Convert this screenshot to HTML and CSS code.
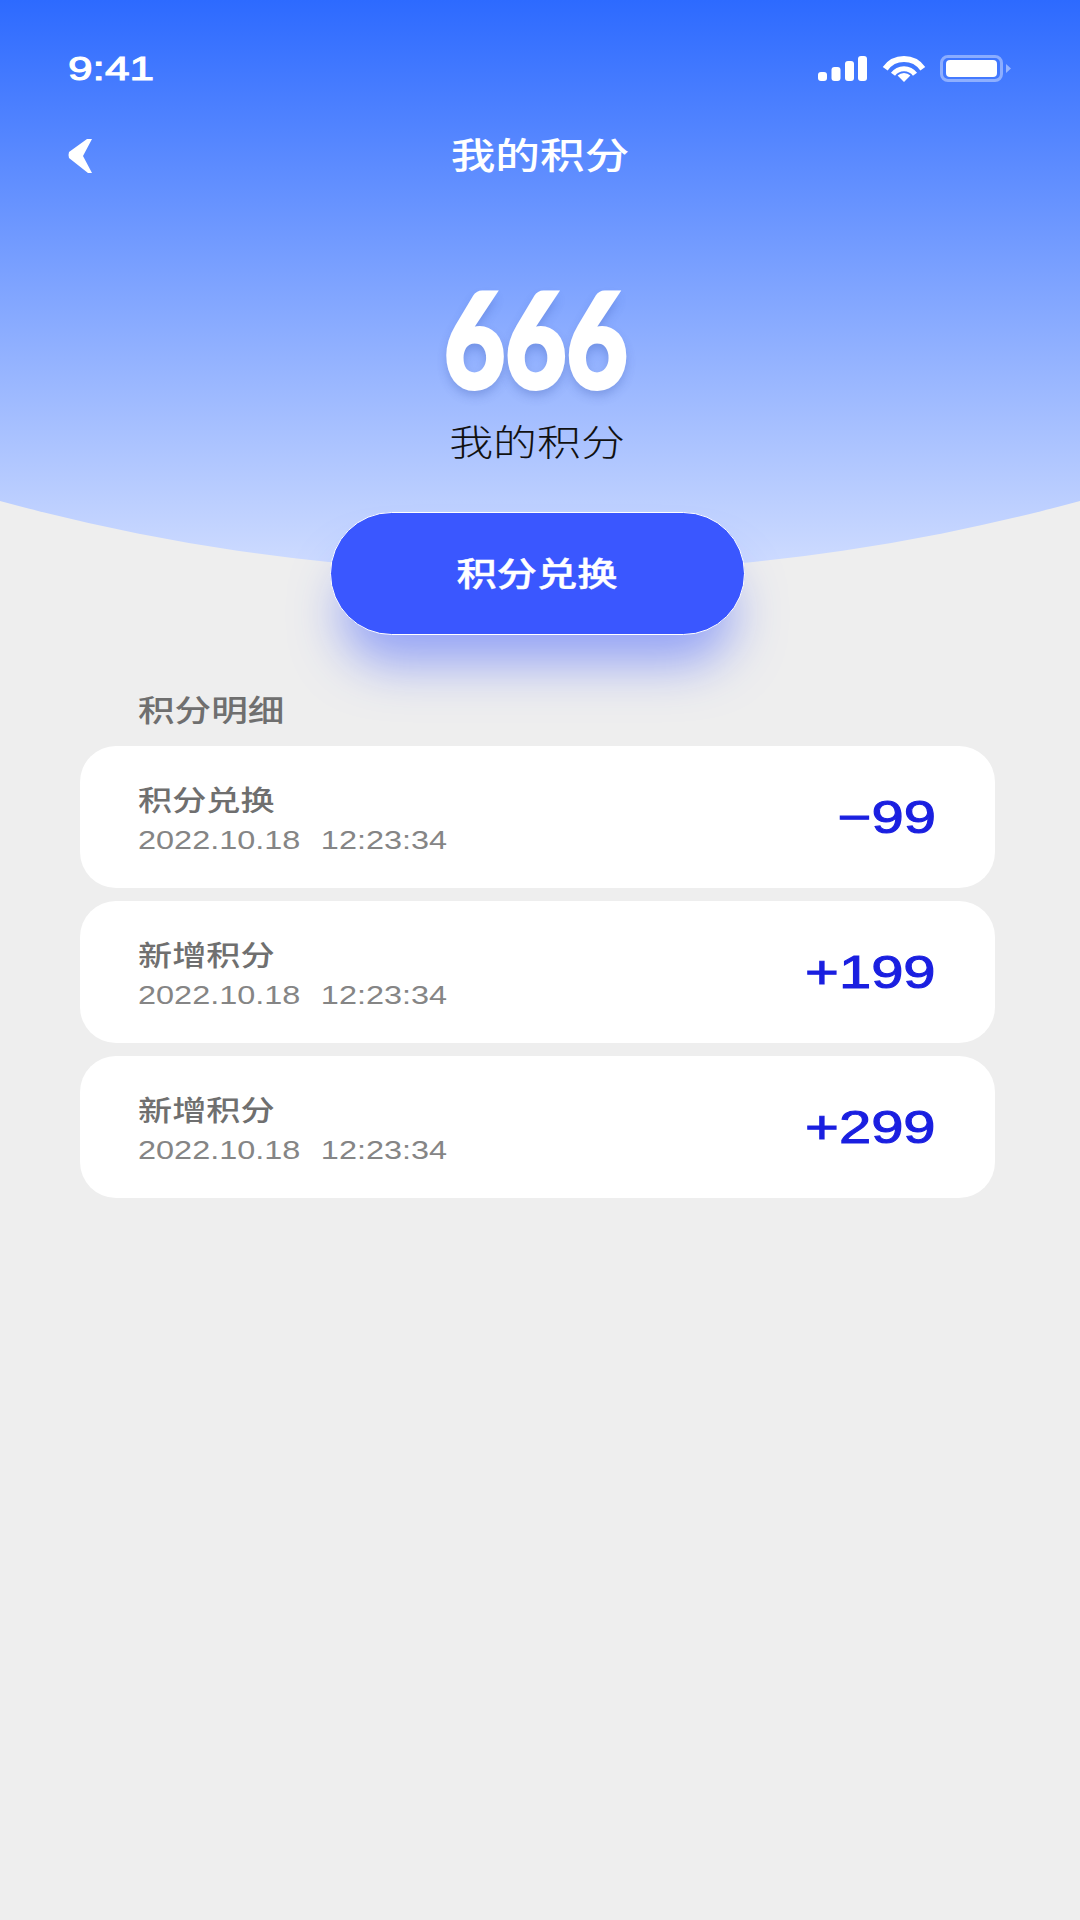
FILE: index.html
```html
<!DOCTYPE html>
<html lang="zh-CN">
<head>
    <meta charset="UTF-8">
    <meta name="viewport" content="width=device-width, initial-scale=1.0">
    <title>我的积分</title>
    <link rel="stylesheet" href="styles.css">
</head>
<body>
    <div class="hero">
        <div class="status">
            <span class="time">9:41</span>
            <div class="status-icons">
                <svg width="49" height="25" viewBox="0 0 49 25" fill="#fff">
                    <rect x="0" y="16" width="9" height="9" rx="3"/>
                    <rect x="13.500" y="11" width="9" height="14" rx="3"/>
                    <rect x="27" y="5" width="9" height="20" rx="3"/>
                    <rect x="40" y="0" width="9" height="25" rx="3"/>
                </svg>
                <svg width="44" height="26" viewBox="0 0 44 26" fill="none" stroke="#fff">
                    <path stroke-width="6" d="M3.200 12.800A23 23 0 0 1 40.800 12.800"/>
                    <path stroke-width="5" d="M11 18.300A13.500 13.500 0 0 1 33 18.300"/>
                    <path fill="#fff" stroke="none" d="M22 26L15.600 19.600A9 9 0 0 1 28.400 19.600Z"/>
                </svg>
                <div class="battery">
                    <div class="battery-body"><span class="battery-fill"></span></div>
                    <span class="battery-nub"></span>
                </div>
            </div>
        </div>
        <div class="nav">
            <svg class="back" width="25" height="35" viewBox="0 0 25 35" fill="#fff">
                <path d="M19 0L24 0L15 17L24 34L20 34L1 19Q0 16 1 13Z"/>
            </svg>
            <div class="nav-title"><span class="wide-title">我的积分</span></div>
        </div>
        <div class="points"><span class="points-num">666</span></div>
        <div class="points-label"><span class="wide">我的积分</span></div>
    </div>

    <div class="redeem">
        <div class="redeem-btn"><span class="wide">积分兑换</span></div>
    </div>

    <div class="detail">
        <div class="detail-title"><span class="wide-left">积分明细</span></div>
        <div class="row">
            <div class="row-info">
                <div class="row-name"><span class="wide-left">积分兑换</span></div>
                <div class="row-date"><span class="wide-left">2022.10.18&nbsp;&nbsp;12:23:34</span></div>
            </div>
            <div class="row-num">−99</div>
        </div>
        <div class="row">
            <div class="row-info">
                <div class="row-name"><span class="wide-left">新增积分</span></div>
                <div class="row-date"><span class="wide-left">2022.10.18&nbsp;&nbsp;12:23:34</span></div>
            </div>
            <div class="row-num">+199</div>
        </div>
        <div class="row">
            <div class="row-info">
                <div class="row-name"><span class="wide-left">新增积分</span></div>
                <div class="row-date"><span class="wide-left">2022.10.18&nbsp;&nbsp;12:23:34</span></div>
            </div>
            <div class="row-num">+299</div>
        </div>
    </div>
</body>
</html>
```

FILE: styles.css
```css
* {
    box-sizing: border-box;
}
html, body {
    margin: 0;
    padding: 0;
}
body {
    width: 1080px;
    height: 1920px;
    overflow: hidden;
    background: #eeeeee;
    font-family: "Liberation Sans", "Noto Sans CJK SC", sans-serif;
}

/* the reference is stretched sideways, all text gets the same factor */
.wide, .wide-left {
    display: inline-block;
    white-space: nowrap;
    transform: scaleX(1.22);
}
.wide-left {
    transform-origin: left center;
}
.wide-title {
    display: inline-block;
    white-space: nowrap;
    transform: scaleX(1.24);
}

.hero {
    height: 573px;
    background: linear-gradient(180deg, #2d6aff 0%, #d0ddff 100%);
    clip-path: circle(2062px at 50% -1489px);
}

.status {
    display: flex;
    justify-content: space-between;
    align-items: center;
    height: 137px;
    padding: 0 69px 0 68px;
}
.time {
    display: inline-block;
    font-size: 33px;
    line-height: 40px;
    color: #fff;
    -webkit-text-stroke: 1px #fff;
    transform: scaleX(1.34);
    transform-origin: left center;
}
.status-icons {
    display: flex;
    align-items: center;
    gap: 14px;
    margin-left: -1px;
}
.status-icons svg:first-child {
    margin-right: 1px;
}
.battery {
    display: flex;
    align-items: center;
    gap: 3px;
}
.battery-body {
    width: 63px;
    height: 27px;
    padding: 2px 3px;
    border: 3px solid rgba(255, 255, 255, 0.4);
    border-radius: 8px;
}
.battery-fill {
    display: block;
    width: 100%;
    height: 100%;
    background: #fff;
    border-radius: 4px;
}
.battery-nub {
    width: 5px;
    height: 9px;
    background: rgba(255, 255, 255, 0.45);
    clip-path: polygon(0 0, 100% 50%, 0 100%);
}

.nav {
    display: grid;
    grid-template-columns: 1fr auto 1fr;
    align-items: center;
    height: 36px;
    padding-left: 68px;
}
.nav-title {
    padding-top: 2px;
    font-size: 36px;
    line-height: 36px;
    font-weight: 500;
    color: #fff;
    margin-left: -68px;
}

.points {
    margin-top: 104px;
    padding-right: 8px;
    height: 120px;
    text-align: center;
    line-height: 120px;
}
.points-num {
    display: inline-block;
    font-family: Lato, Roboto, sans-serif;
    font-size: 132px;
    font-weight: 900;
    color: #fff;
    -webkit-text-stroke: 4px #fff;
    transform: scaleX(0.8);
    text-shadow: 0 6px 12px rgba(40, 70, 160, 0.3);
}
.points-label {
    margin-top: 27px;
    padding-right: 6px;
    height: 40px;
    text-align: center;
    font-size: 36px;
    line-height: 40px;
    font-weight: 300;
    color: #111;
}

.redeem {
    position: relative;
    display: flex;
    justify-content: center;
    margin-top: -61px;
    padding-right: 6px;
}
.redeem-btn {
    display: flex;
    align-items: center;
    justify-content: center;
    width: 415px;
    height: 123px;
    padding-bottom: 4px;
    border: 1px solid #fff;
    border-radius: 62px;
    background: #3a57ff;
    color: #fff;
    font-size: 33px;
    font-weight: 500;
    -webkit-text-stroke: 0.4px #fff;
    box-shadow: 0 40px 50px -12px rgba(58, 87, 255, 0.5);
}

.detail {
    padding: 58px 85px 0 80px;
}
.detail-title {
    height: 36px;
    padding-left: 58px;
    margin-bottom: 17px;
    font-size: 30px;
    line-height: 36px;
    font-weight: 500;
    color: #6f6f6f;
}
.row {
    display: flex;
    justify-content: space-between;
    align-items: center;
    height: 142px;
    margin-bottom: 13px;
    padding: 0 59px 0 58px;
    background: #fff;
    border-radius: 36px;
}
.row-info {
    padding-top: 6px;
}
.row-name {
    font-size: 28px;
    line-height: 36px;
    font-weight: 500;
    color: #6f6f6f;
}
.row-date {
    margin-top: 4px;
    font-size: 26.6px;
    word-spacing: 1px;
    line-height: 32px;
    color: #858585;
}
.row-num {
    font-size: 46px;
    color: #1a1fe0;
    -webkit-text-stroke: 1px #1a1fe0;
    transform: scaleX(1.26);
    transform-origin: right center;
}
```
